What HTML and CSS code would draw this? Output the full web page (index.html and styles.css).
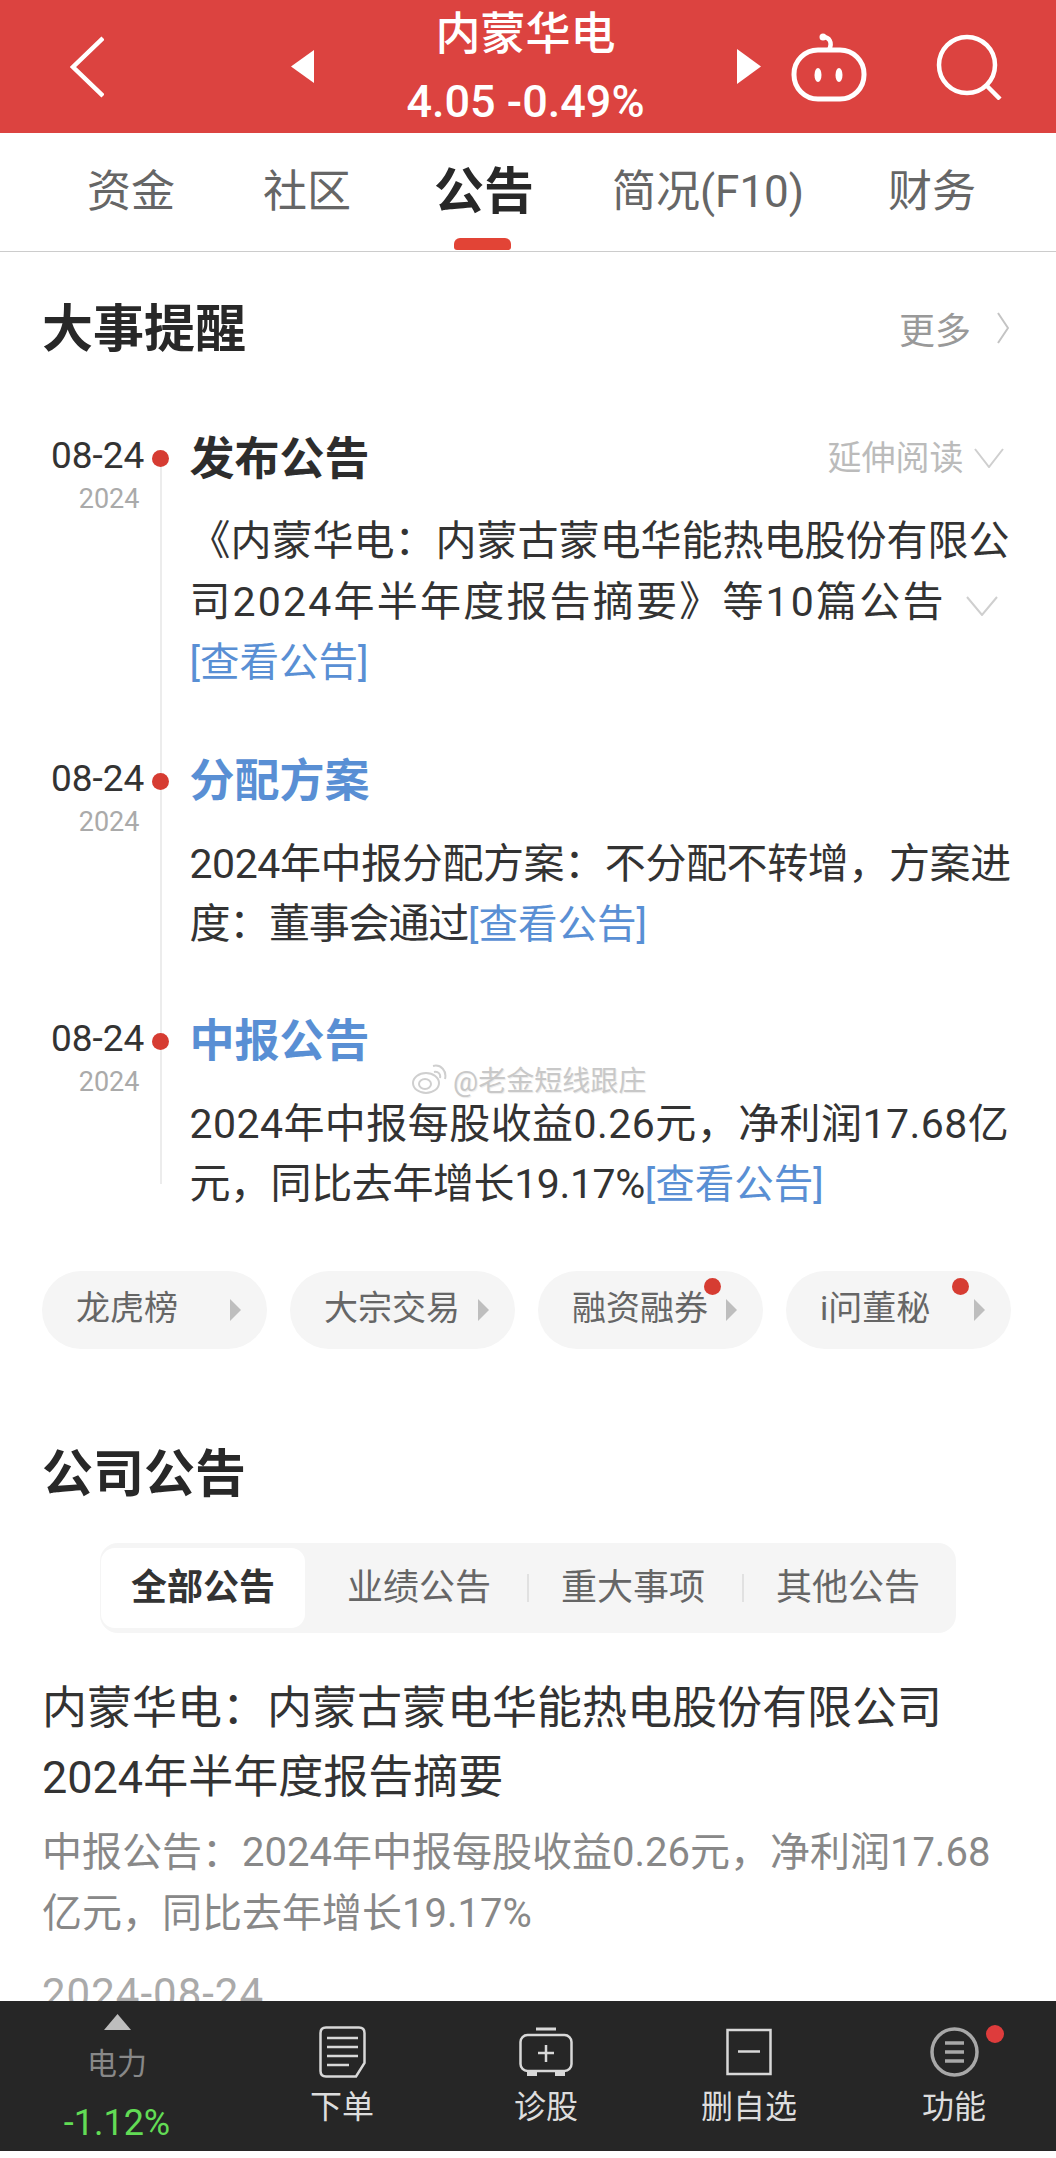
FILE: index.html
```html
<!DOCTYPE html>
<html>
	<head>
		<title>内蒙华电</title>
		<meta charset="utf-8">
		<link rel="stylesheet" href="styles.css">
	</head>
	<body>
		<div class="page">
			<div class="topbar">
				<svg class="back" width="34" height="62" viewBox="0 0 34 62"><path d="M33 2 L3 31 L33 60" fill="none" stroke="#fff" stroke-width="4.5"/></svg>
				<div class="stock">
					<svg width="23" height="33" viewBox="0 0 23 33"><path d="M23 0 V33 L0 16.500 Z" fill="#fff"/></svg>
					<div class="stockText">
						<div class="stockName">内蒙华电</div>
						<div class="stockPrice">4.05 -0.49%</div>
					</div>
					<svg width="24" height="35" viewBox="0 0 24 35"><path d="M0 0 V35 L24 17.500 Z" fill="#fff"/></svg>
				</div>
				<div class="topIcons">
					<svg width="76" height="70" viewBox="0 0 76 70">
						<rect x="3" y="18" width="70" height="49" rx="24" fill="none" stroke="#fff" stroke-width="5"/>
						<path d="M38 18 C42 10 38 5 32 5" fill="none" stroke="#fff" stroke-width="4.500"/>
						<circle cx="32" cy="5" r="3.500" fill="#fff"/>
						<ellipse cx="27" cy="43" rx="3.500" ry="7" fill="#fff"/>
						<ellipse cx="48" cy="43" rx="3.500" ry="7" fill="#fff"/>
					</svg>
					<svg width="66" height="66" viewBox="0 0 66 66">
						<circle cx="31" cy="31" r="28" fill="none" stroke="#fff" stroke-width="4.500"/>
						<path d="M50 51 L64 65" fill="none" stroke="#fff" stroke-width="4.500"/>
					</svg>
				</div>
			</div>

			<div class="tabs">
				<div class="tab">资金</div>
				<div class="tab">社区</div>
				<div class="tab tabActive">公告</div>
				<div class="tab">简况(F10)</div>
				<div class="tab">财务</div>
			</div>

			<div class="content">
				<div class="sectionHead eventsHead">
					<div class="sectionTitle">大事提醒</div>
					<div class="more">更多
						<svg width="12" height="32" viewBox="0 0 12 32"><path d="M1 1 L11 16 L1 31" fill="none" stroke="#c4c4c4" stroke-width="2"/></svg>
					</div>
				</div>

				<div class="timeline">
					<div class="event">
						<div class="eventDate">
							<div class="day">08-24</div>
							<div class="year">2024</div>
						</div>
						<div class="dot"></div>
						<div class="eventBody">
							<div class="eventHead">
								<div class="eventTitle">发布公告</div>
								<div class="expand"><span>延伸阅读</span>
									<svg width="30" height="20" viewBox="0 0 30 20"><path d="M1 1 L15 19 L29 1" fill="none" stroke="#cfcfcf" stroke-width="2"/></svg>
								</div>
							</div>
							<div class="eventText">《内蒙华电&#65306;内蒙古蒙电华能热电股份有限公<br><span class="wide2">司2024年半年度报告摘要》等10篇公告</span><svg class="lineChevron" width="32" height="20" viewBox="0 0 32 20"><path d="M1 1 L16 19 L31 1" fill="none" stroke="#cfcfcf" stroke-width="2"/></svg><br><span class="link">[查看公告]</span></div>
						</div>
					</div>

					<div class="event">
						<div class="eventDate">
							<div class="day">08-24</div>
							<div class="year">2024</div>
						</div>
						<div class="dot"></div>
						<div class="eventBody">
							<div class="eventHead">
								<div class="eventTitle titleLink">分配方案</div>
							</div>
							<div class="eventText"><span class="tight0">2024年中报分配方案&#65306;不分配不转增&#65292;方案进</span><br><span class="tight1">度&#65306;董事会通过</span><span class="link">[查看公告]</span></div>
						</div>
					</div>

					<div class="event">
						<div class="eventDate">
							<div class="day">08-24</div>
							<div class="year">2024</div>
						</div>
						<div class="dot"></div>
						<div class="eventBody">
							<div class="eventHead">
								<div class="eventTitle titleLink">中报公告</div>
							</div>
							<div class="eventText"><span class="wide0">2024年中报每股收益0.26元&#65292;净利润17.68亿</span><br><span class="tight0">元&#65292;同比去年增长19.17%</span><span class="link">[查看公告]</span></div>
						</div>
					</div>
				</div>

				<div class="chips">
					<div class="chip"><span>龙虎榜</span><i class="chipArrow"></i></div>
					<div class="chip"><span>大宗交易</span><i class="chipArrow"></i></div>
					<div class="chip"><span>融资融券</span><i class="chipArrow"></i><b class="chipDot"></b></div>
					<div class="chip"><span>i问董秘</span><i class="chipArrow"></i><b class="chipDot"></b></div>
				</div>

				<div class="sectionHead noticesHead">
					<div class="sectionTitle">公司公告</div>
				</div>

				<div class="segment">
					<div class="segItem segActive">全部公告</div>
					<div class="segItem">业绩公告</div>
					<div class="segSep"></div>
					<div class="segItem">重大事项</div>
					<div class="segSep"></div>
					<div class="segItem">其他公告</div>
				</div>

				<div class="notice">
					<div class="noticeTitle">内蒙华电&#65306;内蒙古蒙电华能热电股份有限公司<br>2024年半年度报告摘要</div>
					<div class="noticeText">中报公告&#65306;2024年中报每股收益0.26元&#65292;净利润17.68<br>亿元&#65292;同比去年增长19.17%</div>
					<div class="noticeDate">2024-08-24</div>
				</div>

				<div class="watermark">
					<svg width="36" height="30" viewBox="0 0 36 30">
						<ellipse cx="14" cy="19" rx="13" ry="10" fill="none" stroke="#cfcfcf" stroke-width="2"/>
						<ellipse cx="13" cy="20" rx="6" ry="5" fill="none" stroke="#cfcfcf" stroke-width="2"/>
						<path d="M21 2 C29 0 35 7 33 15 M22 8 C26 7 29 10 28 14" fill="none" stroke="#cfcfcf" stroke-width="2"/>
					</svg>
					<span>@老金短线跟庄</span>
				</div>
			</div>

			<div class="bottombar">
				<div class="sector">
					<svg width="27" height="16" viewBox="0 0 27 16"><path d="M13.500 0 L27 16 H0 Z" fill="#bdbdbd"/></svg>
					<div class="sectorName">电力</div>
					<div class="sectorChange">-1.12%</div>
				</div>
				<div class="action actionOrder">
					<svg width="47" height="52" viewBox="0 0 47 52">
						<path d="M7 1.500 H40 Q45.500 1.500 45.500 7 V37 L37 50.500 H7 Q1.500 50.500 1.500 45 V7 Q1.500 1.500 7 1.500 Z" fill="none" stroke="#d8d8d8" stroke-width="2.500"/>
						<path d="M8 12 H39 M8 21 H39 M8 30 H39 M8 39 H30" stroke="#d8d8d8" stroke-width="2.500"/>
					</svg>
					<div>下单</div>
				</div>
				<div class="action actionCheck">
					<svg width="54" height="50" viewBox="0 0 54 50">
						<path d="M17 2 H37" stroke="#d8d8d8" stroke-width="3"/>
						<rect x="1.500" y="8" width="51" height="36" rx="7" fill="none" stroke="#d8d8d8" stroke-width="2.500"/>
						<path d="M27 18 V35 M19 26 H35" stroke="#d8d8d8" stroke-width="2.500"/>
						<path d="M8 45 H18 V49 H8 Z M36 45 H46 V49 H36 Z" fill="#d8d8d8"/>
					</svg>
					<div>诊股</div>
				</div>
				<div class="action actionDelete">
					<svg width="46" height="47" viewBox="0 0 46 47">
						<rect x="1.500" y="1.500" width="43" height="44" fill="none" stroke="#d8d8d8" stroke-width="2.500"/>
						<path d="M12 23 H34" stroke="#d8d8d8" stroke-width="2.500"/>
					</svg>
					<div>删自选</div>
				</div>
				<div class="action actionMore">
					<svg width="49" height="50" viewBox="0 0 49 50">
						<ellipse cx="24.500" cy="25" rx="22.500" ry="23" fill="none" stroke="#a8a8a8" stroke-width="3.500"/>
						<path d="M15 16 H34 M15 25 H34 M15 34 H34" stroke="#a8a8a8" stroke-width="3.500"/>
					</svg>
					<div>功能</div>
					<b class="actionDot"></b>
				</div>
			</div>
			<div class="pageEnd"></div>
		</div>
	</body>
</html>
```

FILE: styles.css
```css
* {
	box-sizing: border-box;
}

body {
	margin: 0;
	background-color: white;
	font-family: Roboto, "Noto Sans CJK SC", sans-serif;
	color: rgb(51, 51, 51);
}

svg {
	display: block;
	flex-shrink: 0;
}

.page {
	display: flex;
	flex-direction: column;
	width: 1056px;
	height: 2158px;
	overflow: hidden;
}

/* top red bar */
.topbar {
	display: flex;
	align-items: center;
	flex-shrink: 0;
	height: 133px;
	background-color: rgb(220, 67, 64);
	color: white;
}

.back {
	margin-left: 70px;
}

.stock {
	display: flex;
	align-items: center;
	justify-content: space-between;
	width: 470px;
	margin-left: 187px;
}

.stockText {
	padding-bottom: 4px;
	text-align: center;
}

.stockName {
	font-size: 45px;
	font-weight: 500;
	line-height: 60px;
}

.stockPrice {
	margin-top: 14px;
	font-size: 45px;
	font-weight: 500;
	line-height: 46px;
}

.topIcons {
	display: flex;
	align-items: center;
	gap: 69px;
	margin-left: 30px;
}

/* tab row */
.tabs {
	display: grid;
	grid-template-columns: 176px 171px 178px 276px auto;
	align-items: center;
	flex-shrink: 0;
	height: 119px;
	padding-left: 87px;
	border-bottom: 1px solid rgb(204, 204, 204);
	font-size: 44px;
	color: rgb(102, 102, 102);
}

.tab {
	position: relative;
	line-height: 60px;
}

.tabActive {
	justify-self: start;
	font-size: 50px;
	font-weight: 700;
	color: rgb(40, 40, 40);
}

.tabActive::after {
	content: "";
	position: absolute;
	left: 20px;
	bottom: -28px;
	width: 57px;
	height: 12px;
	border-radius: 6px 6px 3px 3px;
	background-color: rgb(226, 68, 54);
}

.content {
	position: relative;
	flex: 1;
	min-height: 0;
	overflow: hidden;
}

.sectionHead {
	display: flex;
	align-items: center;
	justify-content: space-between;
	height: 52px;
	padding: 0 47px 0 42px;
}

.eventsHead {
	margin-top: 50px;
}

.noticesHead {
	margin-top: 98px;
}

.sectionTitle {
	padding-bottom: 6px;
	font-size: 51px;
	font-weight: 700;
	color: rgb(40, 40, 40);
}

.more {
	display: flex;
	align-items: center;
	gap: 26px;
	font-size: 36px;
	color: rgb(153, 153, 153);
}

/* timeline */
.timeline {
	position: relative;
	margin-top: 74px;
}

.timeline::before {
	content: "";
	position: absolute;
	left: 160px;
	top: 30px;
	bottom: 31px;
	width: 2px;
	background-color: rgb(236, 236, 236);
}

.event {
	display: flex;
	margin-top: 58px;
	padding: 0 48px 0 51px;
}

.event:first-child {
	margin-top: 0;
}

.event:last-child {
	margin-top: 56px;
}

.eventDate {
	width: 94px;
	margin-right: 8px;
	padding-top: 11px;
	white-space: nowrap;
	text-align: right;
}

.day {
	font-size: 37px;
	line-height: 34px;
}

.year {
	margin-top: 12px;
	padding-right: 5px;
	font-size: 27px;
	line-height: 28px;
	color: rgb(170, 170, 170);
}

.dot {
	position: relative;
	flex-shrink: 0;
	width: 17px;
	height: 17px;
	margin: 22px 20px 0 0;
	border-radius: 50%;
	background-color: rgb(214, 60, 50);
}

.eventBody {
	flex: 1;
}

.eventHead {
	display: flex;
	align-items: center;
	justify-content: space-between;
	height: 60px;
}

.eventTitle {
	padding-bottom: 6px;
	font-size: 45px;
	font-weight: 700;
	color: rgb(45, 45, 45);
}

.titleLink {
	color: rgb(89, 143, 212);
}

.expand {
	display: flex;
	align-items: center;
	gap: 11px;
	margin-right: 5px;
	font-size: 34px;
	color: rgb(187, 187, 187);
}

.expand span {
	padding-bottom: 6px;
}

.eventText {
	margin-top: 23px;
	font-size: 41px;
	line-height: 60.500px;
	white-space: nowrap;
}

/* the app justifies these lines, so spacing differs per line */
.wide2 {
	letter-spacing: 2.200px;
}

.wide0 {
	letter-spacing: 0.450px;
}

.tight0 {
	letter-spacing: -0.400px;
}

.tight1 {
	letter-spacing: -1.200px;
}

.lineChevron {
	display: inline-block;
	margin-left: 20px;
}

.link {
	font-size: 39.500px;
	line-height: 1;
	color: rgb(89, 143, 212);
}

/* pill buttons */
.chips {
	display: flex;
	gap: 23px;
	margin-top: 56px;
	padding-left: 42px;
}

.chip {
	position: relative;
	display: flex;
	align-items: center;
	justify-content: space-between;
	width: 225px;
	height: 78px;
	padding: 0 26px 0 34px;
	border-radius: 39px;
	background-color: rgb(245, 245, 245);
	font-size: 34px;
	color: rgb(102, 102, 102);
}

.chip span {
	padding-bottom: 8px;
}

.chipArrow {
	width: 0;
	height: 0;
	border-top: 11px solid transparent;
	border-bottom: 11px solid transparent;
	border-left: 11px solid rgb(190, 190, 190);
}

.chipDot {
	position: absolute;
	right: 42px;
	top: 7px;
	width: 17px;
	height: 17px;
	border-radius: 50%;
	background-color: rgb(214, 60, 50);
}

/* segmented control */
.segment {
	display: grid;
	grid-template-columns: 246px 180px 34px 181px 34px auto;
	align-items: center;
	width: 856px;
	height: 90px;
	margin: 44px 0 0 100px;
	padding: 5px 0 5px 1px;
	border-radius: 18px;
	background-color: rgb(245, 245, 245);
	font-size: 36px;
	color: rgb(102, 102, 102);
}

.segItem {
	display: flex;
	align-items: center;
	padding-bottom: 7px;
}

.segActive {
	justify-content: center;
	width: 204px;
	height: 80px;
	border-radius: 14px;
	background-color: white;
	font-weight: 700;
	color: rgb(51, 51, 51);
}

.segSep {
	width: 2px;
	height: 28px;
	background-color: rgb(225, 225, 225);
}

.notice {
	padding-left: 42px;
	white-space: nowrap;
}

.noticeTitle {
	margin-top: 41px;
	font-size: 45px;
	line-height: 69px;
}

.noticeText {
	margin-top: 10px;
	font-size: 40px;
	line-height: 61px;
	color: rgb(136, 136, 136);
}

.noticeDate {
	margin-top: 28px;
	font-size: 42px;
	letter-spacing: 1px;
	line-height: 44px;
	color: rgb(170, 170, 170);
}

.watermark {
	position: absolute;
	left: 412px;
	top: 807px;
	display: flex;
	align-items: center;
	gap: 5px;
	font-size: 28px;
	color: rgb(200, 200, 200);
	text-shadow: 1px 1px 1px rgb(235, 235, 235);
}

/* bottom dark bar */
.bottombar {
	position: relative;
	display: flex;
	flex-shrink: 0;
	height: 150px;
	background-color: rgb(38, 38, 38);
	font-size: 32px;
	color: rgb(221, 221, 221);
}

.sector {
	position: absolute;
	left: 62px;
	top: 13px;
	display: flex;
	flex-direction: column;
	align-items: center;
	width: 110px;
}

.sectorName {
	margin-top: 14px;
	font-size: 30px;
	line-height: 40px;
	color: rgb(136, 136, 136);
}

.sectorChange {
	margin-top: 19px;
	font-size: 36px;
	line-height: 40px;
	color: rgb(98, 220, 85);
}

.action {
	position: absolute;
	top: 25px;
	display: flex;
	flex-direction: column;
	align-items: center;
	height: 120px;
	line-height: 40px;
}

.action svg {
	height: 52px;
	margin-bottom: 9px;
}

.actionOrder {
	left: 310px;
	width: 64px;
}

.actionCheck {
	left: 514px;
	width: 64px;
}

.actionDelete {
	left: 700px;
	width: 98px;
}

.actionMore {
	left: 922px;
	width: 64px;
}

.actionDot {
	position: absolute;
	left: 64px;
	top: -1px;
	width: 18px;
	height: 18px;
	border-radius: 50%;
	background-color: rgb(222, 60, 60);
}

.pageEnd {
	flex-shrink: 0;
	height: 7px;
	background-color: white;
}
```
